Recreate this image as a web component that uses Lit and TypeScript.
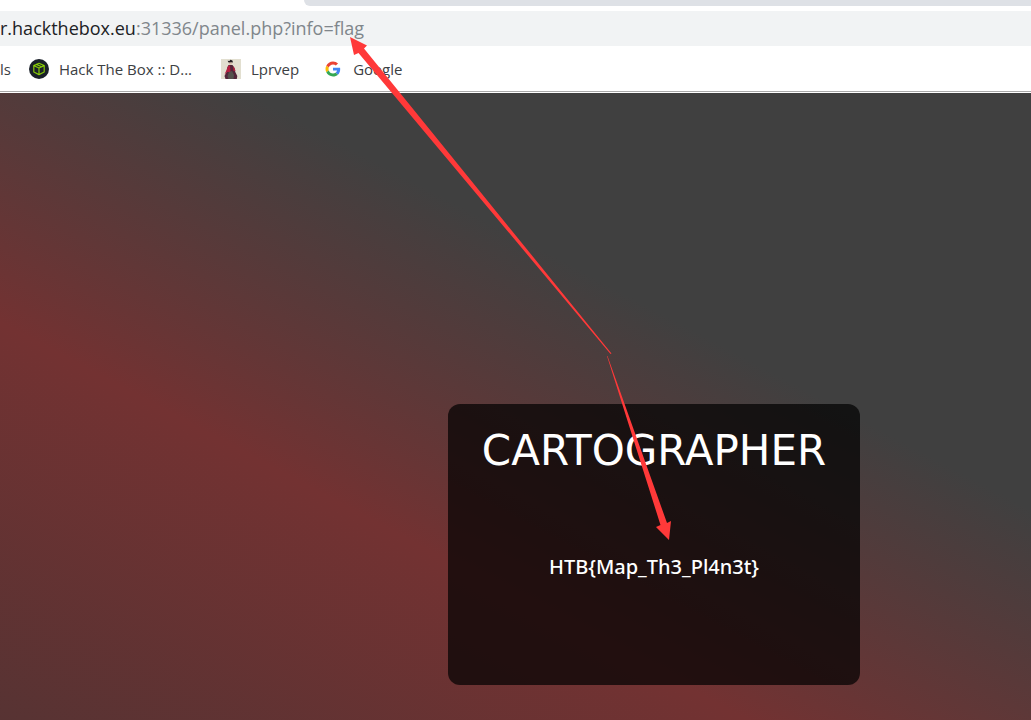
import { LitElement, html, css, svg } from "lit";
import { customElement } from "lit/decorators.js";

const boxIcon = svg`<svg class="icon" viewBox="0 0 20 20" aria-hidden="true">
  <circle cx="10" cy="10" r="10" fill="#1a2029"/>
  <g fill="none" stroke="#9fef00" stroke-opacity=".8" stroke-width="1.2" stroke-linejoin="round">
    <path d="M10 4.3 15.2 6.6V13L10 15.6 4.8 13V6.6Z"/>
    <path d="M4.8 6.6 10 9 15.2 6.6M10 9V15.6M7.4 5.4 12.6 7.8"/>
  </g></svg>`;

const portraitIcon = svg`<svg class="icon" viewBox="0 0 20 20" aria-hidden="true">
  <rect width="20" height="20" fill="#e2dfd0"/>
  <path d="M7.500 6h4l2 3 .8 4 2 4-.5 3H4.500L3.500 17l2-4 .8-4.500Z" fill="#54263a"/>
  <path d="M7 7 9 6.300 9.500 13H6l-2.500 2.500 2-4.500Z" fill="#b51f3f"/>
  <path d="M12 7 13.500 9 14.500 12 12.500 12Z" fill="#b51f3f"/>
  <path d="m8 13 3-1 2 4-.5 4H7.500l-1-3Z" fill="#55514c"/>
  <circle cx="9.500" cy="4.200" r="1.600" fill="#d9bfae"/>
  <path d="M6.600 1.800 8.400 2l1-1.200 2 .6.600 2.200-1.800-.4-2.600.4Z" fill="#211c20"/></svg>`;

const googleIcon = svg`<svg class="icon" viewBox="-8 -8 64 64" aria-hidden="true">
  <path fill="#EA4335" d="M24 9.500c3.540 0 6.710 1.220 9.210 3.600l6.850-6.850C35.900 2.380 30.470 0 24 0 14.620 0 6.510 5.380 2.560 13.220l7.980 6.190C12.430 13.720 17.740 9.500 24 9.500z"/>
  <path fill="#4285F4" d="M46.980 24.550c0-1.570-.15-3.090-.38-4.550H24v9.020h12.940c-.58 2.960-2.260 5.480-4.780 7.180l7.730 6c4.510-4.180 7.090-10.360 7.090-17.650z"/>
  <path fill="#FBBC05" d="M10.530 28.590c-.48-1.450-.76-2.990-.76-4.590s.27-3.140.76-4.590l-7.980-6.190C.92 16.460 0 20.120 0 24c0 3.880.92 7.540 2.560 10.780l7.970-6.190z"/>
  <path fill="#34A853" d="M24 48c6.480 0 11.930-2.130 15.890-5.810l-7.730-6c-2.150 1.450-4.920 2.300-8.160 2.300-6.260 0-11.570-4.220-13.470-9.910l-7.980 6.190C6.510 42.620 14.620 48 24 48z"/></svg>`;

@customElement("app-root")
export class AppRoot extends LitElement {
  static styles = css`
    :host {
      display: flex;
      flex-direction: column;
      position: relative;
      min-height: 100vh;
      overflow: hidden;
      background: #fff;
      font-family: "Open Sans", "Noto Sans", sans-serif;
    }
    .tabs {
      display: flex;
      height: 6px;
      margin-bottom: 5px;
    }
    .active-tab {
      width: 304px;
    }
    .tab-rest {
      flex: 1;
      background: #dee1e6;
      border-bottom-left-radius: 6px;
    }
    .address {
      height: 35px;
      line-height: 35px;
      background: #f1f3f4;
      color: #80868b;
      font-size: 18px;
      white-space: nowrap;
    }
    .host {
      color: #202124;
    }
    .bookmarks {
      display: flex;
      align-items: center;
      gap: 24px;
      height: 45px;
      margin-bottom: 1px;
      border-bottom: 1px solid #a9a9a9;
      font-size: 15px;
      line-height: 20px;
    }
    .bookmarks a {
      display: flex;
      align-items: center;
      gap: 10px;
      color: #3c4043;
      text-decoration: none;
      white-space: nowrap;
    }
    .bookmarks .cut {
      margin-right: -6px;
    }
    .bookmarks .long {
      width: 138px;
    }
    .icon {
      display: block;
      width: 20px;
      height: 20px;
    }
    main {
      flex: 1;
      display: flex;
      justify-content: center;
      align-items: flex-end;
      padding: 35px 0 35px 277px;
      background: linear-gradient(28deg, #573333 0, #733232 351px, #404040 670px);
    }
    .card {
      box-sizing: border-box;
      width: 412px;
      min-height: 281px;
      border-radius: 12px;
      background: rgba(0, 0, 0, 0.7);
      color: #fff;
      text-align: center;
      padding: 22px 0;
    }
    h1 {
      margin: 0;
      font: 400 42px/50px "DejaVu Sans", sans-serif;
    }
    p {
      margin: 76px 0 0;
      font-family: "Noto Sans", sans-serif;
      font-size: 20px;
      line-height: 30px;
      font-weight: 500;
    }
    .arrows {
      position: absolute;
      top: 0;
      left: 0;
      width: 1031px;
      height: 720px;
      pointer-events: none;
      fill: #ff3939;
    }
  `;

  render() {
    return html`
      <div class="tabs"><div class="active-tab"></div><div class="tab-rest"></div></div>
      <div class="address" role="textbox" aria-label="Address" tabindex="0"><span class="host">r.hackthebox.eu</span>:31336/panel.php?info=flag</div>
      <nav class="bookmarks" aria-label="Bookmarks">
        <a class="cut" href="#">ls</a>
        <a href="#">${boxIcon}<span class="long">Hack The Box :: D...</span></a>
        <a href="#">${portraitIcon}<span>Lprvep</span></a>
        <a href="#">${googleIcon}<span>Google</span></a>
      </nav>
      <main>
        <section class="card">
          <h1>CARTOGRAPHER</h1>
          <p>HTB{Map_Th3_Pl4n3t}</p>
        </section>
      </main>
      <svg class="arrows" viewBox="0 0 1031 720" aria-hidden="true">
        <path d="M350 37 367 45.500 364 48.500 611.500 353.500 610.500 354 358.500 53 354 55Z"/>
        <path d="M669 540 671 521 667 523 607.500 356 607 356 660.500 525 656 527Z"/>
      </svg>
    `;
  }
}
